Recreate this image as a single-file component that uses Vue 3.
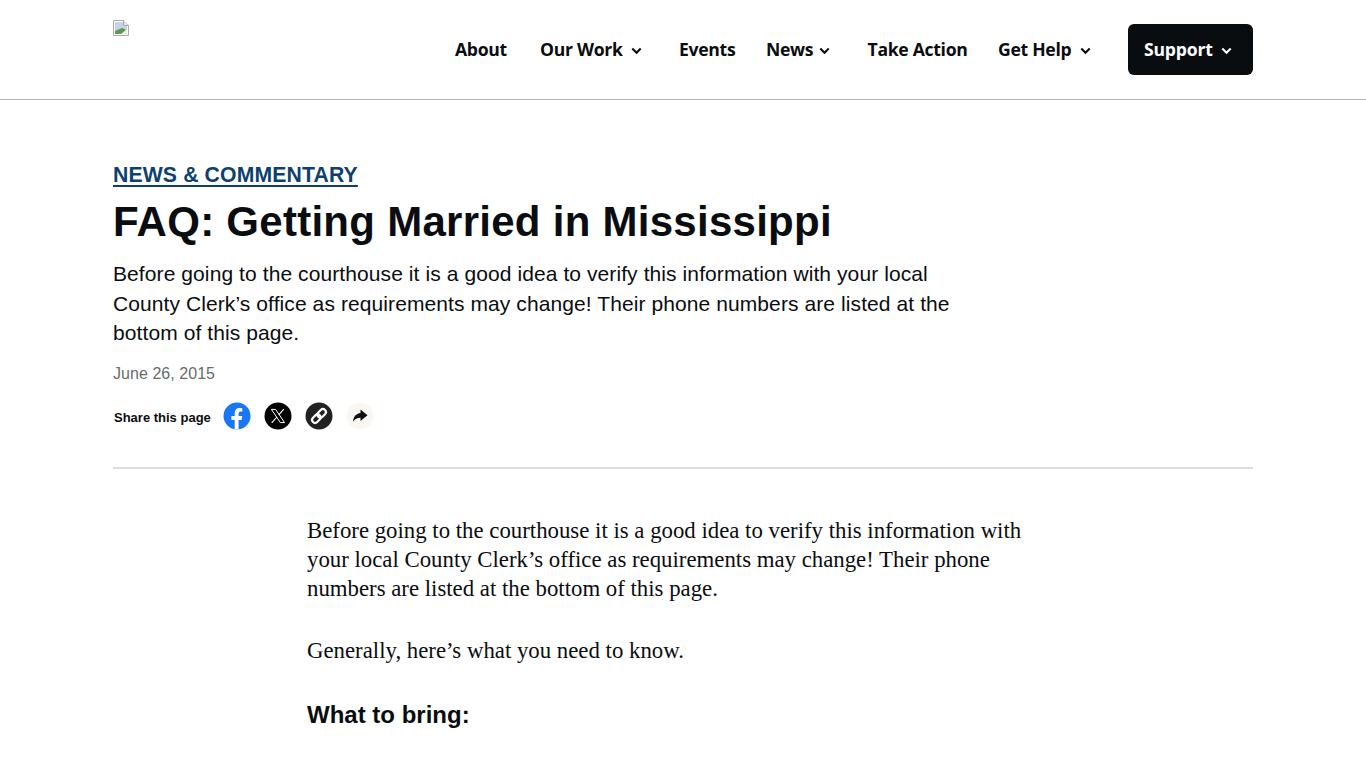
<script setup>
// label widths are fixed so the items keep their places with the fallback font
const navItems = [
  { label: 'About', caret: false, width: 53 },
  { label: 'Our Work', caret: true, width: 83 },
  { label: 'Events', caret: false, width: 55 },
  { label: 'News', caret: true, width: 45.5 },
  { label: 'Take Action', caret: false, width: 98.5 },
  { label: 'Get Help', caret: true, width: 74 },
]
</script>

<template>
  <div class="page">
    <header class="site-header">
      <div class="header-inner">
        <a class="logo" href="#" aria-label="Home">
          <svg width="16" height="16" viewBox="0 0 16 16">
            <path d="M0.5 0.5H10.5L15.5 5.5V15.5H0.5Z" fill="#fff" stroke="#a9a9a9" />
            <path d="M10.5 0.5V5.5H15.5" fill="#e8e8e8" stroke="#a9a9a9" />
            <path d="M2 2H10V6H14V9L2 11Z" fill="#c4d2ee" />
            <path d="M2 11L9 8L14 10V14H2Z" fill="#5b9a4c" />
            <path d="M8 14L14 9V14Z" fill="#e9f0e4" />
          </svg>
        </a>
        <nav class="main-nav">
          <a v-for="item in navItems" :key="item.label" class="nav-link" href="#">
            <span class="nav-text" :style="{ width: item.width + 'px' }">{{ item.label }}</span>
            <svg v-if="item.caret" class="caret" width="11" height="8" viewBox="0 0 11 8">
              <path d="M1.3 1.5L5.5 5.7L9.7 1.5" fill="none" stroke="currentColor" stroke-width="2.1" />
            </svg>
          </a>
          <a class="support-btn" href="#">
            <span class="nav-text">Support</span>
            <svg class="caret" width="11" height="8" viewBox="0 0 11 8">
              <path d="M1.3 1.5L5.5 5.7L9.7 1.5" fill="none" stroke="currentColor" stroke-width="2.1" />
            </svg>
          </a>
        </nav>
      </div>
    </header>

    <main class="article">
      <section class="article-head">
        <a class="eyebrow" href="#">NEWS &amp; COMMENTARY</a>
        <h1 class="title">FAQ: Getting Married in Mississippi</h1>
        <p class="lede">Before going to the courthouse it is a good idea to verify this information with your local County Clerk’s office as requirements may change! Their phone numbers are listed at the bottom of this page.</p>
        <div class="date">June 26, 2015</div>
        <div class="share">
          <span class="share-label">Share this page</span>
          <a class="share-icon" href="#" aria-label="Facebook">
            <svg width="28" height="28" viewBox="0 0 28 28">
              <circle cx="14" cy="14" r="13.5" fill="#1877f2" />
              <path d="M11.7 27.4V18H8.4V14H11.7V11.2C11.7 7.9 13.7 6.1 16.6 6.1C18 6.1 19.3 6.4 19.3 6.4V9.6H17.7C16.1 9.6 15.6 10.6 15.6 11.6V14H19.2L18.6 18H15.6V27.4Z" fill="#fff" />
            </svg>
          </a>
          <a class="share-icon" href="#" aria-label="X">
            <svg width="28" height="28" viewBox="0 0 28 28">
              <circle cx="14" cy="14" r="13.5" fill="#000" />
              <path d="M7.4 7.4H11.6L20.6 20.6H16.4Z" fill="none" stroke="#fff" stroke-width="1" />
              <path d="M19.8 7.2L14.8 12.9M12.9 15L7.7 20.8" fill="none" stroke="#fff" stroke-width="1.1" />
            </svg>
          </a>
          <a class="share-icon" href="#" aria-label="Copy link">
            <svg width="28" height="28" viewBox="0 0 28 28">
              <circle cx="14" cy="14" r="13.5" fill="#222" />
              <g fill="none" stroke="#fff" stroke-width="2.2" transform="rotate(-45 14 14)">
                <rect x="5.5" y="11" width="9.5" height="6" rx="3" />
                <rect x="13" y="11" width="9.5" height="6" rx="3" />
              </g>
            </svg>
          </a>
          <a class="share-icon" href="#" aria-label="Share">
            <svg width="28" height="28" viewBox="0 0 28 28">
              <circle cx="14" cy="14" r="13.5" fill="#faf7f3" />
              <path d="M14.5 7.5L21.5 13.2L14.5 19V15.7C11.3 15.7 8.8 16.7 7 19.8C7.3 15 10 11.4 14.5 10.9Z" fill="#111" />
            </svg>
          </a>
        </div>
      </section>

      <section class="article-body">
        <p>Before going to the courthouse it is a good idea to verify this information with your local County Clerk’s office as requirements may change! Their phone numbers are listed at the bottom of this page.</p>
        <p>Generally, here’s what you need to know.</p>
        <h2>What to bring:</h2>
      </section>
    </main>
  </div>
</template>

<style scoped>
.page { background: #fff; color: #0a0d10; height: 768px; overflow: hidden; }
a { color: inherit; text-decoration: none; }

.site-header { border-bottom: 1px solid #b3b3b3; height: 99px; }
.header-inner {
  width: 1140px; margin: 0 auto; height: 99px;
  display: flex; justify-content: space-between;
}
.logo { display: block; width: 16px; height: 16px; margin-top: 20px; }
.main-nav { display: flex; align-items: center; height: 51px; margin-top: 24px; }
.nav-link {
  display: flex; align-items: center; gap: 7.5px; margin-right: 32px;
  font: 700 17.6px "Open Sans", sans-serif; letter-spacing: -0.3px; color: #0a0d10;
}
.nav-text { margin-top: -2px; white-space: nowrap; }
.nav-link .caret { margin-top: 2px; margin-right: 5.5px; }
.support-btn {
  display: flex; align-items: center; gap: 8px; width: 125px; height: 51px; box-sizing: border-box;
  padding-left: 16px; border-radius: 6px; background: #0a0d10; color: #fff;
  font: 700 17.6px "Open Sans", sans-serif; letter-spacing: -0.2px;
}
.support-btn .caret { margin-top: 2px; }

.article { width: 1140px; margin: 0 auto; }
.article-head { padding-top: 62px; padding-bottom: 37px; border-bottom: 2px solid #dcdcdc; }
.eyebrow {
  display: inline-block; font: 700 21.2px/26px "Liberation Sans", Arial, sans-serif; letter-spacing: 0.14px;
  color: #0d3f73; text-decoration: underline; text-decoration-thickness: 2px; text-underline-offset: 3px;
}
.title {
  margin: 9px 0 0; font: 700 42px/50px "Liberation Sans", Arial, sans-serif; color: #0a0d10;
  letter-spacing: 0.27px;
}
.lede {
  margin: 12px 0 0; width: 840px; font: 400 21px/29.5px "Liberation Sans", Arial, sans-serif; color: #0a0d10;
  letter-spacing: 0.09px;
}
.date { margin-top: 16px; font: 400 16px/20px "Liberation Sans", Arial, sans-serif; color: #6b6b6b; letter-spacing: 0.05px; }
.share { display: flex; align-items: center; margin-top: 18px; height: 28px; }
.share-label { font: 700 13px/18px "Liberation Sans", Arial, sans-serif; width: 108.5px; margin-left: 1px; margin-top: 5px; }
.share-icon { display: block; width: 28px; height: 28px; margin-right: 13px; }

.article-body { width: 740px; margin-left: 194px; padding-top: 47px; }
.article-body p {
  margin: 0 0 33px; font: 400 22.8px/29px "Liberation Serif", Georgia, serif; color: #0a0d10;
}
.article-body h2 { margin: 0; padding-top: 1px; font: 700 24px/32px "Liberation Sans", Arial, sans-serif; color: #0a0d10; }
</style>

<style>
html, body { margin: 0; background: #fff; }
</style>
